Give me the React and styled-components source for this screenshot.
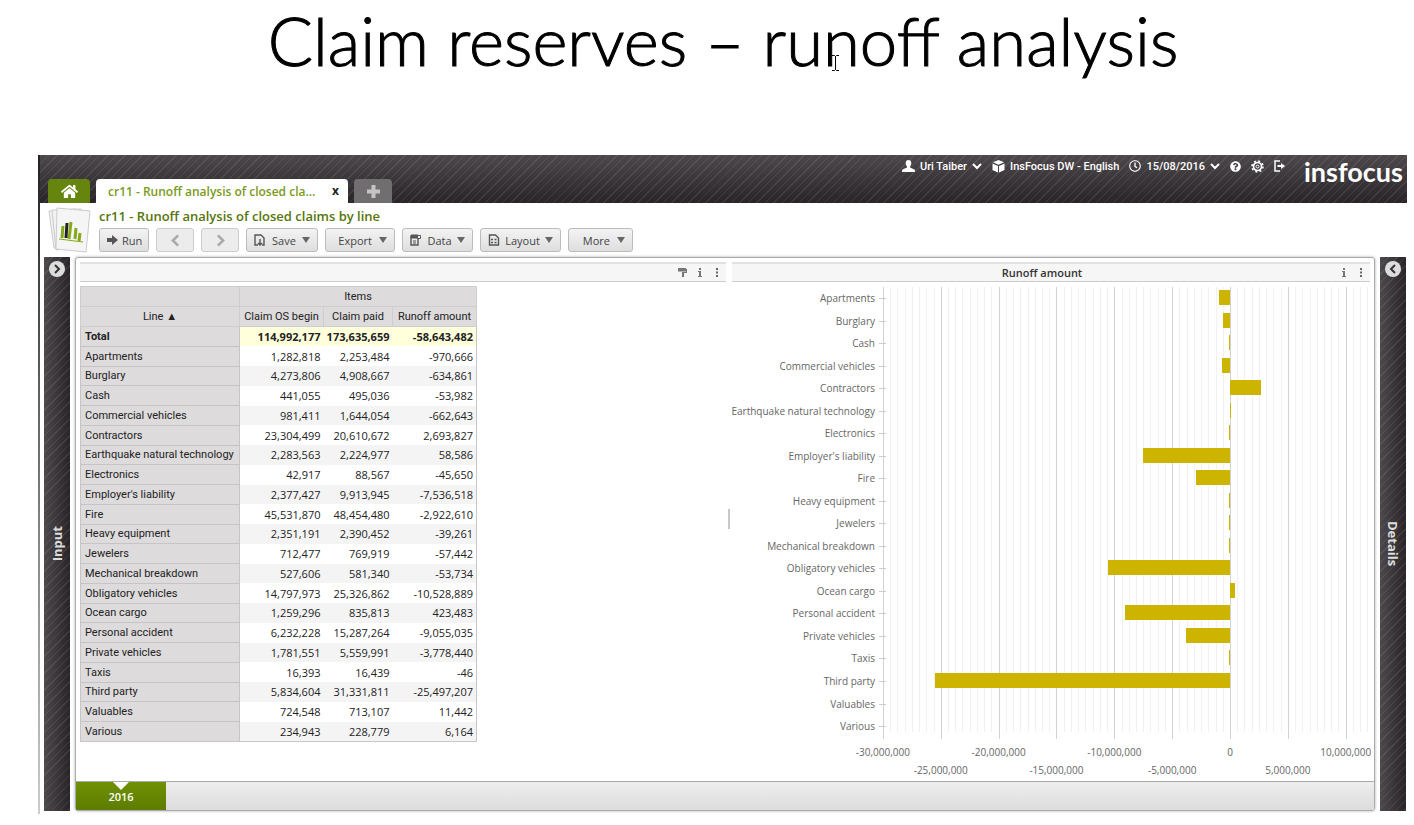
import React, { useState } from 'react';
import styled, { createGlobalStyle, css } from 'styled-components';
import {
  FaHome,
  FaRegClock,
  FaQuestionCircle,
} from 'react-icons/fa';

const GlobalStyle = createGlobalStyle`
  *, *::before, *::after {
    box-sizing: border-box;
  }
  body {
    margin: 0;
    background: #fff;
    color: #222;
    font-family: 'Open Sans', 'Noto Sans', sans-serif;
    font-size: 11px;
  }
  button, input {
    font: inherit;
    margin: 0;
  }
  svg {
    flex-shrink: 0;
  }
`;

const stripes = css`
  background-image:
    repeating-linear-gradient(135deg, rgba(255, 255, 255, 0.09) 0 1px, transparent 1px 6px),
    linear-gradient(${props => props.$dir || 'to bottom'}, #4d484b, #282427);
`;

const Slide = styled.div`
  display: flex;
  flex-direction: column;
  min-height: 100vh;
`;

const SlideTitle = styled.h1`
  margin: 0;
  height: 155px;
  padding: 0 0 0 32px;
  text-align: center;
  font-family: Lato, sans-serif;
  font-size: 67px;
  font-weight: 300;
  line-height: 80px;
  color: #000;
  -webkit-text-stroke: 1px #000;
`;

const Cursor = styled.svg`
  position: absolute;
  left: calc(50% + 124px);
  top: 55px;
  width: 9px;
  height: 16px;
`;

const Application = styled.div`
  display: flex;
  flex-direction: column;
  flex-grow: 1;
  margin: 0 7px 11px 38px;
  border-left: 2px solid #333;
  border-image: linear-gradient(#222, #ccc) 1;
`;

const TopBar = styled.header`
  display: flex;
  justify-content: space-between;
  height: 48px;
  ${stripes}
`;

const Tabs = styled.nav`
  display: flex;
  align-items: flex-end;
  gap: 6px;
  padding-left: 8px;
`;

const HomeTab = styled.button`
  display: flex;
  align-items: center;
  justify-content: center;
  width: 42px;
  height: 24px;
  padding: 0;
  border: 0;
  border-radius: 4px 4px 0 0;
  background: #65850f;
  color: #fff;
  font-size: 17px;
`;

const PageTab = styled.div`
  display: flex;
  align-items: center;
  justify-content: space-between;
  width: 252px;
  height: 24px;
  padding: 0 9px 0 12px;
  border-radius: 4px 4px 0 0;
  background: #fff;
  color: #7a9a1b;
  font-size: 12px;
  font-weight: 600;
`;

const CloseButton = styled.button`
  padding: 0;
  border: 0;
  background: none;
  color: #222;
  font-size: 12px;
  font-weight: 700;
  line-height: 16px;
`;

const AddTab = styled(HomeTab)`
  width: 38px;
  background: #716e70;
`;

const UserMenu = styled.div`
  display: flex;
  align-items: flex-start;
  color: #fff;
`;

const MenuItem = styled.button`
  display: flex;
  align-items: center;
  gap: 5px;
  height: 22px;
  margin-right: 10px;
  padding: 0;
  border: 0;
  background: none;
  color: #fff;
  font-family: Roboto, 'Open Sans', sans-serif;
  font-size: 11px;
  font-weight: 500;
  white-space: nowrap;
`;

const Logo = styled.svg`
  width: 104px;
  height: 32px;
  margin: 2px 0 0 8px;
`;

const ReportHeader = styled.div`
  display: flex;
  gap: 8px;
  height: 54px;
  padding: 4px 8px 0;
`;

const ReportTitle = styled.h2`
  margin: 0;
  color: #56750a;
  font-size: 13px;
  font-weight: 600;
  line-height: 18px;
`;

const Toolbar = styled.div`
  display: flex;
  gap: 7px;
  padding-top: 3px;
`;

const ToolButton = styled.button`
  display: flex;
  align-items: center;
  justify-content: ${props => (props.$end ? 'flex-end' : 'space-between')};
  gap: ${props => (props.$end ? 7 : 4)}px;
  width: ${props => props.$width}px;
  height: 24px;
  padding: 0 7px;
  border: 1px solid #bbb;
  border-radius: 3px;
  background: linear-gradient(#f3f3f3, #dedede);
  color: #444;
  font-size: 11px;
  &:disabled {
    justify-content: center;
    border-color: #ccc;
    background: #ececec;
    color: #aaa;
  }
`;

const Caret = styled.span`
  border: 4px solid transparent;
  border-top: 6px solid #666;
  border-bottom: 0;
`;

const Workspace = styled.main`
  display: flex;
  flex-grow: 1;
  gap: 5px;
  padding: 0 1px 3px 4px;
`;

const SidePanel = styled.aside`
  display: flex;
  flex-direction: column;
  align-items: center;
  width: 26px;
  padding-top: 4px;
  ${stripes}
`;

const PanelToggle = styled.button`
  display: flex;
  align-items: center;
  justify-content: center;
  width: 16px;
  height: 16px;
  padding: 0;
  border: 0;
  border-radius: 50%;
  background: #ddd;
  color: #333;
`;

const PanelLabel = styled.span`
  margin: auto 0;
  writing-mode: vertical-rl;
  transform: ${props => (props.$flip ? 'rotate(180deg)' : 'none')};
  color: #ddd;
  font-size: 13px;
  font-weight: 700;
`;

const Report = styled.section`
  display: flex;
  flex-direction: column;
  flex-grow: 1;
  min-width: 0;
  border: 1px solid #aaa;
  border-radius: 3px;
  box-shadow: 0 0 3px #aaa;
`;

const Panes = styled.div`
  display: grid;
  grid-template-columns: 652px minmax(0, 1fr);
  flex-grow: 1;
  padding: 4px 4px 0;
`;

const Pane = styled.div`
  display: flex;
  flex-direction: column;
  min-width: 0;
`;

const PaneHeader = styled.div`
  display: flex;
  align-items: center;
  gap: 9px;
  height: 20px;
  margin-right: ${props => props.$inset || 0}px;
  padding: 0 5px;
  border-top: 2px solid #e2e2e2;
  border-bottom: 1px solid #ccc;
  background: #f6f6f6;
`;

const PaneTitle = styled.h3`
  flex-grow: 1;
  margin: 0;
  padding-left: 16px;
  text-align: center;
  color: #333;
  font-size: 11px;
  font-weight: 600;
`;

const IconButton = styled.button`
  display: flex;
  padding: 0;
  border: 0;
  background: none;
  color: #777;
`;

const TableArea = styled.div`
  display: flex;
  justify-content: space-between;
  align-items: flex-start;
  flex-grow: 1;
  padding: 4px 2px 0 0;
`;

const Splitter = styled.div`
  align-self: center;
  width: 2px;
  height: 20px;
  margin-bottom: 30px;
  background: #c8c8c8;
`;

const Table = styled.table`
  width: 397px;
  height: 456px;
  table-layout: fixed;
  border-collapse: collapse;
  border: 1px solid #c8c6c7;
  white-space: nowrap;
`;

const HeadCell = styled.th`
  height: 20px;
  padding: 0;
  border: 1px solid #cfcdce;
  background: #dddbdc;
  font-family: Roboto, 'Open Sans', sans-serif;
  font-weight: 400;
  line-height: 15px;
`;

const RowHead = styled.th`
  padding: 0 4px;
  border: 1px solid #c6c4c5;
  background: #dddbdc;
  text-align: left;
  font-family: Roboto, 'Open Sans', sans-serif;
  font-weight: ${props => (props.$total ? 700 : 400)};
  line-height: 15px;
`;

const Cell = styled.td`
  padding: 0 3px;
  text-align: right;
  font-weight: ${props => (props.$total ? 700 : 400)};
  line-height: 15px;
`;

const Row = styled.tr`
  background: ${props => (props.$total ? '#ffffdc' : '#fff')};
  &:nth-child(odd):not(:first-child) {
    background: #f4f4f4;
  }
`;

const Chart = styled.svg`
  display: block;
  overflow: visible;
  width: 100%;
  height: 496px;
  font-family: 'Open Sans', 'Noto Sans', sans-serif;
  font-size: 10px;
  fill: #666;
`;

const PeriodBar = styled.footer`
  height: 29px;
  border-top: 1px solid #aaa;
  background: linear-gradient(#eee, #dcdcdc);
`;

const PeriodTab = styled.button`
  position: relative;
  width: 90px;
  height: 28px;
  padding: 0;
  border: 0;
  background: linear-gradient(#6f9104, #5d7c00);
  color: #fff;
  font-size: 11px;
  font-weight: 600;
  &::before {
    content: '';
    position: absolute;
    top: 0;
    left: 37px;
    border: 8px solid transparent;
    border-top-color: #fff;
    border-bottom: 0;
  }
`;

const total = ['114,992,177', '173,635,659', '-58,643,482'];

const lines = [
  ['Apartments', '1,282,818', '2,253,484', '-970,666'],
  ['Burglary', '4,273,806', '4,908,667', '-634,861'],
  ['Cash', '441,055', '495,036', '-53,982'],
  ['Commercial vehicles', '981,411', '1,644,054', '-662,643'],
  ['Contractors', '23,304,499', '20,610,672', '2,693,827'],
  ['Earthquake natural technology', '2,283,563', '2,224,977', '58,586'],
  ['Electronics', '42,917', '88,567', '-45,650'],
  ["Employer's liability", '2,377,427', '9,913,945', '-7,536,518'],
  ['Fire', '45,531,870', '48,454,480', '-2,922,610'],
  ['Heavy equipment', '2,351,191', '2,390,452', '-39,261'],
  ['Jewelers', '712,477', '769,919', '-57,442'],
  ['Mechanical breakdown', '527,606', '581,340', '-53,734'],
  ['Obligatory vehicles', '14,797,973', '25,326,862', '-10,528,889'],
  ['Ocean cargo', '1,259,296', '835,813', '423,483'],
  ['Personal accident', '6,232,228', '15,287,264', '-9,055,035'],
  ['Private vehicles', '1,781,551', '5,559,991', '-3,778,440'],
  ['Taxis', '16,393', '16,439', '-46'],
  ['Third party', '5,834,604', '31,331,811', '-25,497,207'],
  ['Valuables', '724,548', '713,107', '11,442'],
  ['Various', '234,943', '228,779', '6,164'],
];

const toNumber = text => Number(text.replace(/,/g, ''));

const chevrons = {
  down: 'M1 3l4 4 4-4',
  left: 'M7 1L3 5l4 4',
  right: 'M3 1l4 4-4 4',
};

const Chevron = ({ to, size }) => (
  <svg width={size} height={size} viewBox="0 0 10 10" fill="none" stroke="currentColor" strokeWidth="2">
    <path d={chevrons[to]} />
  </svg>
);

const UserIcon = () => (
  <svg width="13" height="12" viewBox="0 0 13 12" fill="#fff">
    <path d="M6.500 0C8.300 0 9.300 1.300 9.300 3S8.600 6 8 6.600v1L12 9.200c.700.300 1 .900 1 2.800H0c0-1.900.300-2.500 1-2.800l4-1.600v-1C4.400 6 3.700 4.700 3.700 3S4.700 0 6.500 0z" />
  </svg>
);

const PlusIcon = () => (
  <svg width="13" height="13" viewBox="0 0 13 13" stroke="#c4c4c4" strokeWidth="4">
    <path d="M6.500 0v13M0 6.500h13" />
  </svg>
);

const SaveIcon = () => (
  <svg width="12" height="12" viewBox="0 0 12 12" fill="none" stroke="#555" strokeWidth="1.4">
    <path d="M4 11H1V1h6l3 3v7H8" />
    <path d="M6 5v6M4 9l2 2 2-2" />
  </svg>
);

const DataIcon = () => (
  <svg width="12" height="12" viewBox="0 0 12 12" fill="none" stroke="#555">
    <path d="M1 3h7v8H1z" strokeWidth="1.4" />
    <path d="M1 1h7v3H1z" fill="#555" />
    <path d="M7.500 1.500h3v3h-3z" fill="#eee" />
    <path d="M3 7h3M3 9h3" />
  </svg>
);

const LayoutIcon = () => (
  <svg width="12" height="12" viewBox="0 0 12 12" fill="none" stroke="#555">
    <path d="M1.500 1h6l3 3v7h-9z" strokeWidth="1.4" />
    <path d="M3 5.500h2M6.500 5.500h2M3 8.500h2M6.500 8.500h2" strokeWidth="1.5" />
  </svg>
);

const RunIcon = () => (
  <svg width="11" height="10" viewBox="0 0 11 10" fill="#555">
    <path d="M0 3h5V0l6 5-6 5V7H0z" />
  </svg>
);

const CubeIcon = () => (
  <svg width="13" height="13" viewBox="0 0 13 13" fill="#fff">
    <path d="M6.500 0L12 2.300 6.500 4.800 1 2.300zM.500 3.400L6 5.900V12.500L.500 10zM12.500 3.400V10L7 12.500V5.900z" />
  </svg>
);

const GearIcon = () => (
  <svg width="13" height="13" viewBox="0 0 13 13" fill="none" stroke="#fff">
    <circle cx="6.500" cy="6.500" r="4" strokeWidth="1.700" />
    <circle cx="6.500" cy="6.500" r="1.500" />
    <circle cx="6.500" cy="6.500" r="5.500" strokeWidth="1.600" strokeDasharray="2 2.320" />
  </svg>
);

const ExitIcon = () => (
  <svg width="11" height="12" viewBox="0 0 11 12" fill="none" stroke="#fff" strokeWidth="1.500">
    <path d="M6 1H1v10h5" />
    <path d="M3.500 6H8" strokeWidth="2" />
    <path d="M7 3l4 3-4 3z" fill="#fff" stroke="none" />
  </svg>
);

const InfoIcon = () => (
  <svg width="8" height="11" viewBox="0 0 8 11" fill="#777">
    <path d="M3 1h2v2H3zM2 4h3v5h1v1H2V9h1V5H2z" />
  </svg>
);

const DotsIcon = () => (
  <svg width="8" height="11" viewBox="0 0 8 11" fill="#666">
    <path d="M3 1h2v2H3zM3 4.500h2v2H3zM3 8h2v2H3z" />
  </svg>
);

const RollerIcon = () => (
  <svg width="9" height="11" viewBox="0 0 9 11" fill="#777">
    <path d="M0 1h8v1h1v4H6v4H4V5h4V4.500H0z" />
  </svg>
);

const ReportIcon = () => (
  <svg width="43" height="46" viewBox="0 0 43 46">
    <g stroke="#ccc" fill="#f2f2f2">
      <path d="M1 4l27-2 4 36-26 3z" />
      <path d="M4 3l29-1 2 38-27 3z" />
      <path d="M9 1l33 3-4 41-30-3z" fill="#f5f5f5" />
    </g>
    <g strokeWidth="3">
      <path d="M15 19l-1 12M23 15l-2 17M28 21l-1 11M32 26l-1 8" stroke="#86a91c" />
      <path d="M19 16l-1 15" stroke="#222" />
    </g>
    <path d="M11 32l24 3" stroke="#86a91c" />
  </svg>
);

const Wordmark = () => (
  <Logo viewBox="0 0 104 32" fill="#fff" role="img" aria-label="insfocus">
    <text x="1" y="25" fontFamily="Lato, sans-serif" fontSize="27" fontWeight="700">insfocus</text>
  </Logo>
);

const RunoffChart = () => {
  const zero = 498;
  const unit = 11.57;
  const ticks = [-30, -25, -20, -15, -10, -5, 0, 5, 10];
  const minor = [];
  for (let i = -30; i <= 12; i += 0.625) minor.push(i);
  return (
    <Chart viewBox="0 0 638 496" preserveAspectRatio="xMinYMin meet">
      <g shapeRendering="crispEdges">
        {minor.map(m => (
          <path key={m} d={`M${Math.round(zero + m * unit)} 5V450`} stroke="#f1f1f1" />
        ))}
        {ticks.map(t => (
          <path key={t} d={`M${Math.round(zero + t * unit)} 5V457`} stroke="#d2d2d2" />
        ))}
      </g>
      {lines.map(([name, , , amount], i) => {
        const y = 16 + i * 22.53;
        const value = (toNumber(amount) / 1000000) * unit;
        // losses always leave a visible sliver beside the zero line
        const length = value < 0 ? Math.min(value, -1) : value;
        return (
          <g key={name}>
            <text x="143" y={y + 4} textAnchor="end">{name}</text>
            <path d={`M147 ${Math.round(y)}h7`} stroke="#ccc" shapeRendering="crispEdges" />
            <rect
              x={length < 0 ? zero + length : zero}
              y={Math.round(y - 8)}
              width={Math.abs(length)}
              height="15"
              fill="#cdb400"
              shapeRendering="crispEdges"
            />
          </g>
        );
      })}
      {ticks.map((t, i) => (
        <text key={t} x={zero + t * unit} y={i % 2 ? 492 : 474} textAnchor="middle">
          {(t * 1000000).toLocaleString('en-US')}
        </text>
      ))}
    </Chart>
  );
};

const RunoffTable = () => (
  <Table>
    <colgroup>
      <col style={{ width: 159 }} />
      <col style={{ width: 84 }} />
      <col style={{ width: 69 }} />
      <col />
    </colgroup>
    <thead>
      <tr>
        <HeadCell />
        <HeadCell colSpan={3} scope="colgroup">Items</HeadCell>
      </tr>
      <tr>
        <HeadCell scope="col">Line ▲</HeadCell>
        <HeadCell scope="col">Claim OS begin</HeadCell>
        <HeadCell scope="col">Claim paid</HeadCell>
        <HeadCell scope="col">Runoff amount</HeadCell>
      </tr>
    </thead>
    <tbody>
      <Row $total>
        <RowHead $total scope="row">Total</RowHead>
        {total.map(value => <Cell $total key={value}>{value}</Cell>)}
      </Row>
      {lines.map(([name, ...values]) => (
        <Row key={name}>
          <RowHead scope="row">{name}</RowHead>
          {values.map(value => <Cell key={value}>{value}</Cell>)}
        </Row>
      ))}
    </tbody>
  </Table>
);

const App = () => {
  const [tabOpen, setTabOpen] = useState(true);
  return (
    <Slide>
      <GlobalStyle />
      <SlideTitle>Claim reserves – runoff analysis</SlideTitle>
      <Cursor viewBox="0 0 9 16" fill="none" stroke="#000">
        <path d="M1 .5h2.500l1 1 1-1H8M4.500 1v14M1 15.500h2.500l1-1 1 1H8" />
      </Cursor>
      <Application>
        <TopBar>
          <Tabs>
            <HomeTab aria-label="Home"><FaHome /></HomeTab>
            {tabOpen && (
              <PageTab>
                cr11 - Runoff analysis of closed cla...
                <CloseButton onClick={() => setTabOpen(false)}>x</CloseButton>
              </PageTab>
            )}
            <AddTab aria-label="New tab"><PlusIcon /></AddTab>
          </Tabs>
          <UserMenu>
            <MenuItem>
              <UserIcon />
              Uri Taiber
              <Chevron to="down" size={10} />
            </MenuItem>
            <MenuItem>
              <CubeIcon />
              InsFocus DW - English
            </MenuItem>
            <MenuItem>
              <FaRegClock size={12} />
              15/08/2016
              <Chevron to="down" size={10} />
            </MenuItem>
            <MenuItem aria-label="Help"><FaQuestionCircle size={11} /></MenuItem>
            <MenuItem aria-label="Settings"><GearIcon /></MenuItem>
            <MenuItem aria-label="Log out"><ExitIcon /></MenuItem>
            <Wordmark />
          </UserMenu>
        </TopBar>
        <ReportHeader>
          <ReportIcon />
          <div>
            <ReportTitle>cr11 - Runoff analysis of closed claims by line</ReportTitle>
            <Toolbar>
              <ToolButton $width={50}><RunIcon />Run</ToolButton>
              <ToolButton $width={38} disabled aria-label="Back"><Chevron to="left" size={13} /></ToolButton>
              <ToolButton $width={38} disabled aria-label="Forward"><Chevron to="right" size={13} /></ToolButton>
              <ToolButton $width={72}><SaveIcon />Save<Caret /></ToolButton>
              <ToolButton $width={70} $end>Export<Caret /></ToolButton>
              <ToolButton $width={71}><DataIcon />Data<Caret /></ToolButton>
              <ToolButton $width={81}><LayoutIcon />Layout<Caret /></ToolButton>
              <ToolButton $width={65} $end>More<Caret /></ToolButton>
            </Toolbar>
          </div>
        </ReportHeader>
        <Workspace>
          <SidePanel $dir="to right">
            <PanelToggle aria-label="Open input"><Chevron to="right" size={10} /></PanelToggle>
            <PanelLabel $flip>Input</PanelLabel>
          </SidePanel>
          <Report>
            <Panes>
              <Pane>
                <PaneHeader $inset={6}>
                  <PaneTitle />
                  <IconButton aria-label="Format"><RollerIcon /></IconButton>
                  <IconButton aria-label="Table info"><InfoIcon /></IconButton>
                  <IconButton aria-label="Table menu"><DotsIcon /></IconButton>
                </PaneHeader>
                <TableArea>
                  <RunoffTable />
                  <Splitter />
                </TableArea>
              </Pane>
              <Pane>
                <PaneHeader>
                  <PaneTitle>Runoff amount</PaneTitle>
                  <IconButton aria-label="Chart info"><InfoIcon /></IconButton>
                  <IconButton aria-label="Chart menu"><DotsIcon /></IconButton>
                </PaneHeader>
                <RunoffChart />
              </Pane>
            </Panes>
            <PeriodBar>
              <PeriodTab>2016</PeriodTab>
            </PeriodBar>
          </Report>
          <SidePanel $dir="to right">
            <PanelToggle aria-label="Open details"><Chevron to="left" size={10} /></PanelToggle>
            <PanelLabel>Details</PanelLabel>
          </SidePanel>
        </Workspace>
      </Application>
    </Slide>
  );
};

export default App;
